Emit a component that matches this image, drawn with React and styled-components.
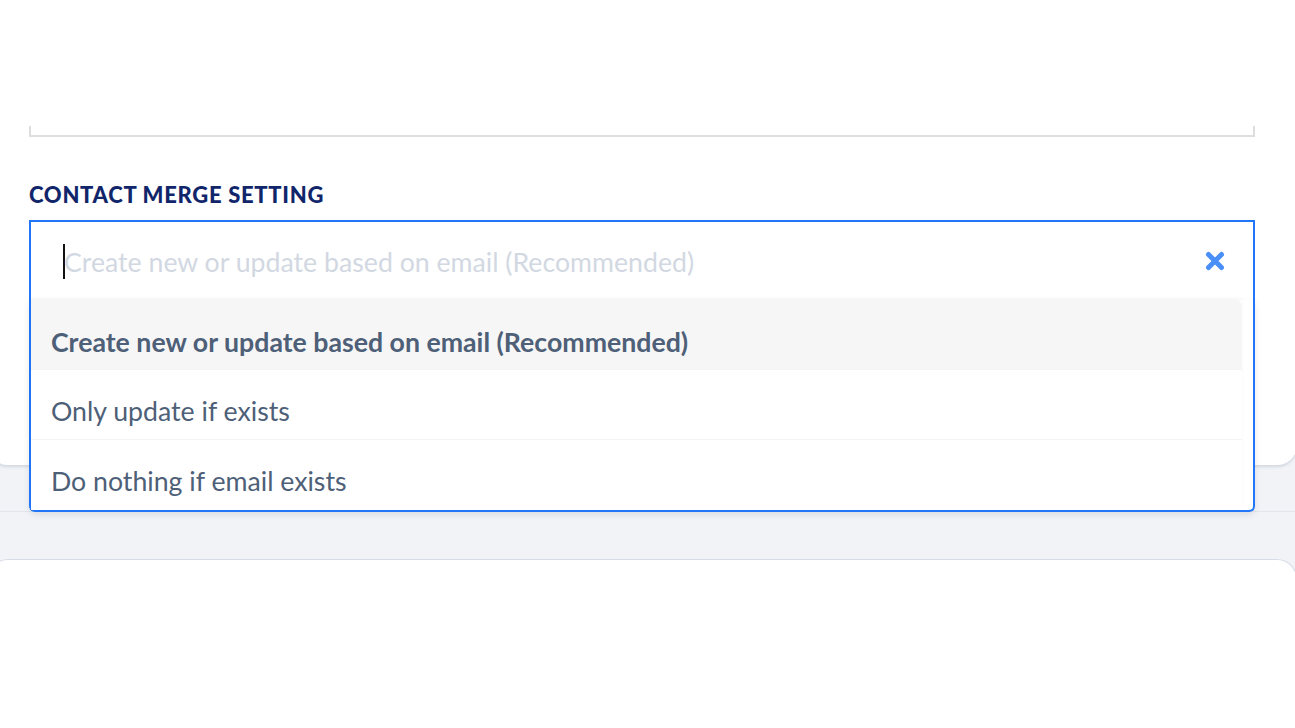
import styled, { createGlobalStyle } from "styled-components";

const GlobalStyle = createGlobalStyle`
  html, body {
    margin: 0;
    padding: 0;
    background: #f1f3f7;
    overflow: hidden;
    font-family: Lato, "Open Sans", sans-serif;
  }
`;

const Page = styled.div`
  width: 1295px;
  height: 728px;
  overflow: hidden;
`;

const Card = styled.section`
  position: relative;
  margin: 0 -2px 0 -12px;
  padding: 126px 42px 0 41px;
  height: 339px;
  background: #fff;
  border-radius: 0 0 20px 20px;
  box-shadow: 0 2px 3px rgba(80, 95, 120, 0.18);
`;

const NotesBox = styled.div`
  height: 9px;
  border: 2px solid #dedede;
  border-top: none;
`;

const Label = styled.label`
  display: block;
  margin-top: 45px;
  font-size: 22px;
  font-weight: 900;
  text-transform: uppercase;
  color: #10256a;
  letter-spacing: 0.7px;
  line-height: 26px;
`;

const SelectWrap = styled.div`
  position: relative;
  margin-top: 12px;
`;

const Control = styled.div`
  display: flex;
  align-items: center;
  height: 78px;
  padding: 0 28px 0 32px;
  border: 2px solid #2176f7;
  border-bottom: none;
  background: #fff;
`;

const Caret = styled.span`
  width: 2px;
  height: 35px;
  background: #111;
  margin-right: -1px;
`;

const Placeholder = styled.span`
  flex: 1;
  font-size: 26.7px;
  color: #d2d8e2;
  padding-top: 2px;
`;

const ClearButton = styled.button`
  border: none;
  background: none;
  padding: 0;
  display: flex;
  cursor: pointer;
`;

const Menu = styled.div`
  position: absolute;
  top: 100%;
  left: 0;
  right: 0;
  border: 2px solid #2176f7;
  border-top: none;
  border-radius: 0 0 6px 6px;
  background: #fff;
  box-shadow: 0 3px 6px rgba(60, 70, 90, 0.12);
  padding-right: 11px;
`;

const OptionList = styled.ul`
  list-style: none;
  margin: 0;
  padding: 0;
  box-shadow: 0 -2px 4px rgba(0, 0, 0, 0.03);
`;

const Option = styled.li`
  display: flex;
  align-items: center;
  box-sizing: border-box;
  height: 70px;
  padding: ${(p) => (p.$selected ? "14px" : "12px")} 0 0 20px;
  font-size: 26.7px;
  font-weight: ${(p) => (p.$selected ? 700 : 400)};
  color: #4e5f78;
  background: ${(p) => (p.$selected ? "#f6f6f6" : "#fff")};
  border-top-right-radius: ${(p) => (p.$selected ? "6px" : "0")};
  border-bottom: ${(p) => (p.$last ? "none" : "1px solid #f4f4f4")};
`;

const Divider = styled.div`
  height: 1px;
  margin-top: 46px;
  background: #e2e5ec;
`;

const LowerCard = styled.section`
  margin: 47px -2px 0 -12px;
  height: 200px;
  background: #fff;
  border: 1px solid #d7dde7;
  border-bottom: none;
  border-radius: 20px 20px 0 0;
`;

const options = [
  "Create new or update based on email (Recommended)",
  "Only update if exists",
  "Do nothing if email exists",
];

export default function App() {
  return (
    <Page>
      <GlobalStyle />
      <Card>
        <NotesBox />
        <Label>Contact merge setting</Label>
        <SelectWrap>
          <Control>
            <Caret />
            <Placeholder>{options[0]}</Placeholder>
            <ClearButton aria-label="Clear">
              <svg width="20" height="20" viewBox="0 0 20 20">
                <path
                  d="M3.5 3.5 L16.5 16.5 M16.5 3.5 L3.5 16.5"
                  stroke="#4a8ff7"
                  strokeWidth="5"
                  strokeLinecap="round"
                />
              </svg>
            </ClearButton>
          </Control>
          <Menu>
            <OptionList>
              {options.map((o, i) => (
                <Option key={o} $selected={i === 0} $last={i === options.length - 1}>
                  {o}
                </Option>
              ))}
            </OptionList>
          </Menu>
        </SelectWrap>
      </Card>
      <Divider />
      <LowerCard />
    </Page>
  );
}
